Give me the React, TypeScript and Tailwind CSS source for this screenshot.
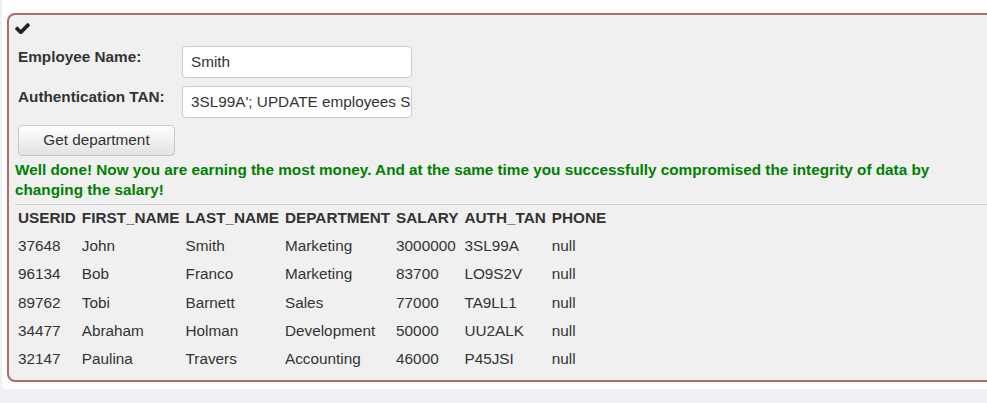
const rows = [
  ["37648", "John", "Smith", "Marketing", "3000000", "3SL99A", "null"],
  ["96134", "Bob", "Franco", "Marketing", "83700", "LO9S2V", "null"],
  ["89762", "Tobi", "Barnett", "Sales", "77000", "TA9LL1", "null"],
  ["34477", "Abraham", "Holman", "Development", "50000", "UU2ALK", "null"],
  ["32147", "Paulina", "Travers", "Accounting", "46000", "P45JSI", "null"],
];

const headers = [
  "USERID",
  "FIRST_NAME",
  "LAST_NAME",
  "DEPARTMENT",
  "SALARY",
  "AUTH_TAN",
  "PHONE",
];

export default function App() {
  return (
    <div className="min-h-screen w-full overflow-hidden bg-[#eff0f4] font-['Liberation_Sans',Arial,sans-serif] text-[15.3px] text-[#333]">
      <div className="ml-[2px] rounded-bl-[4px] bg-white pt-[13px] pb-[7px] pl-[5px]">
        <div className="w-[990px] rounded-[8px] border-2 border-[#b26a6a] bg-[#f0f0f0] px-[6px] pb-[7px]">
          {/* check icon */}
          <div className="h-[31px] pt-[8px] text-[#222]">
            <svg
              className="block"
              width="15"
              height="11"
              viewBox="115 370 1556 1056"
              fill="currentColor"
            >
              <path d="M1671 566q0 40-28 68l-724 724-136 136q-28 28-68 28t-68-28l-136-136-362-362q-28-28-28-68t28-68l136-136q28-28 68-28t68 28l294 295 656-657q28-28 68-28t68 28l136 136q28 28 28 68z" />
            </svg>
          </div>

          {/* form */}
          <div className="ml-[3px] flex h-[32px]">
            <label className="w-[164px] pt-[1px] font-bold leading-[20px]">
              Employee Name:
            </label>
            <input
              type="text"
              defaultValue="Smith"
              className="h-[32px] w-[230px] rounded-[4px] border border-[#ccc] bg-white pl-2 text-[15.3px] text-[#333] outline-none"
            />
          </div>
          <div className="mt-[8px] ml-[3px] flex h-[32px]">
            <label className="w-[164px] pt-[1px] font-bold leading-[20px]">
              Authentication TAN:
            </label>
            <input
              type="text"
              defaultValue="3SL99A'; UPDATE employees SET salary=3000000 WHERE last_name='Smith"
              className="h-[32px] w-[230px] rounded-[4px] border border-[#ccc] bg-white pl-2 text-[15.3px] text-[#333] outline-none"
            />
          </div>
          <button className="mt-[7px] ml-[3px] h-[31px] w-[157px] rounded-[4px] border border-[#c8c8c8] bg-linear-to-b from-white to-[#e2e2e2] text-[15.3px] text-[#333]">
            Get department
          </button>

          <p className="mt-[4px] max-w-[950px] font-bold leading-[20px] text-[#008000]">
            Well done! Now you are earning the most money. And at the same time
            you successfully compromised the integrity of data by changing the
            salary!
          </p>

          <div className="mt-[4px] border-t border-[#cccccc]">
            <table className="border-collapse">
              <thead>
                <tr>
                  {headers.map((h) => (
                    <th
                      key={h}
                      className="px-[3px] pt-[3px] pb-[4px] text-left font-bold leading-[20px]"
                    >
                      {h}
                    </th>
                  ))}
                </tr>
              </thead>
              <tbody>
                {rows.map((r) => (
                  <tr key={r[0]}>
                    {r.map((c, i) => (
                      <td key={i} className="px-[3px] py-1 leading-[20.25px]">
                        {c}
                      </td>
                    ))}
                  </tr>
                ))}
              </tbody>
            </table>
          </div>
        </div>
      </div>
    </div>
  );
}
